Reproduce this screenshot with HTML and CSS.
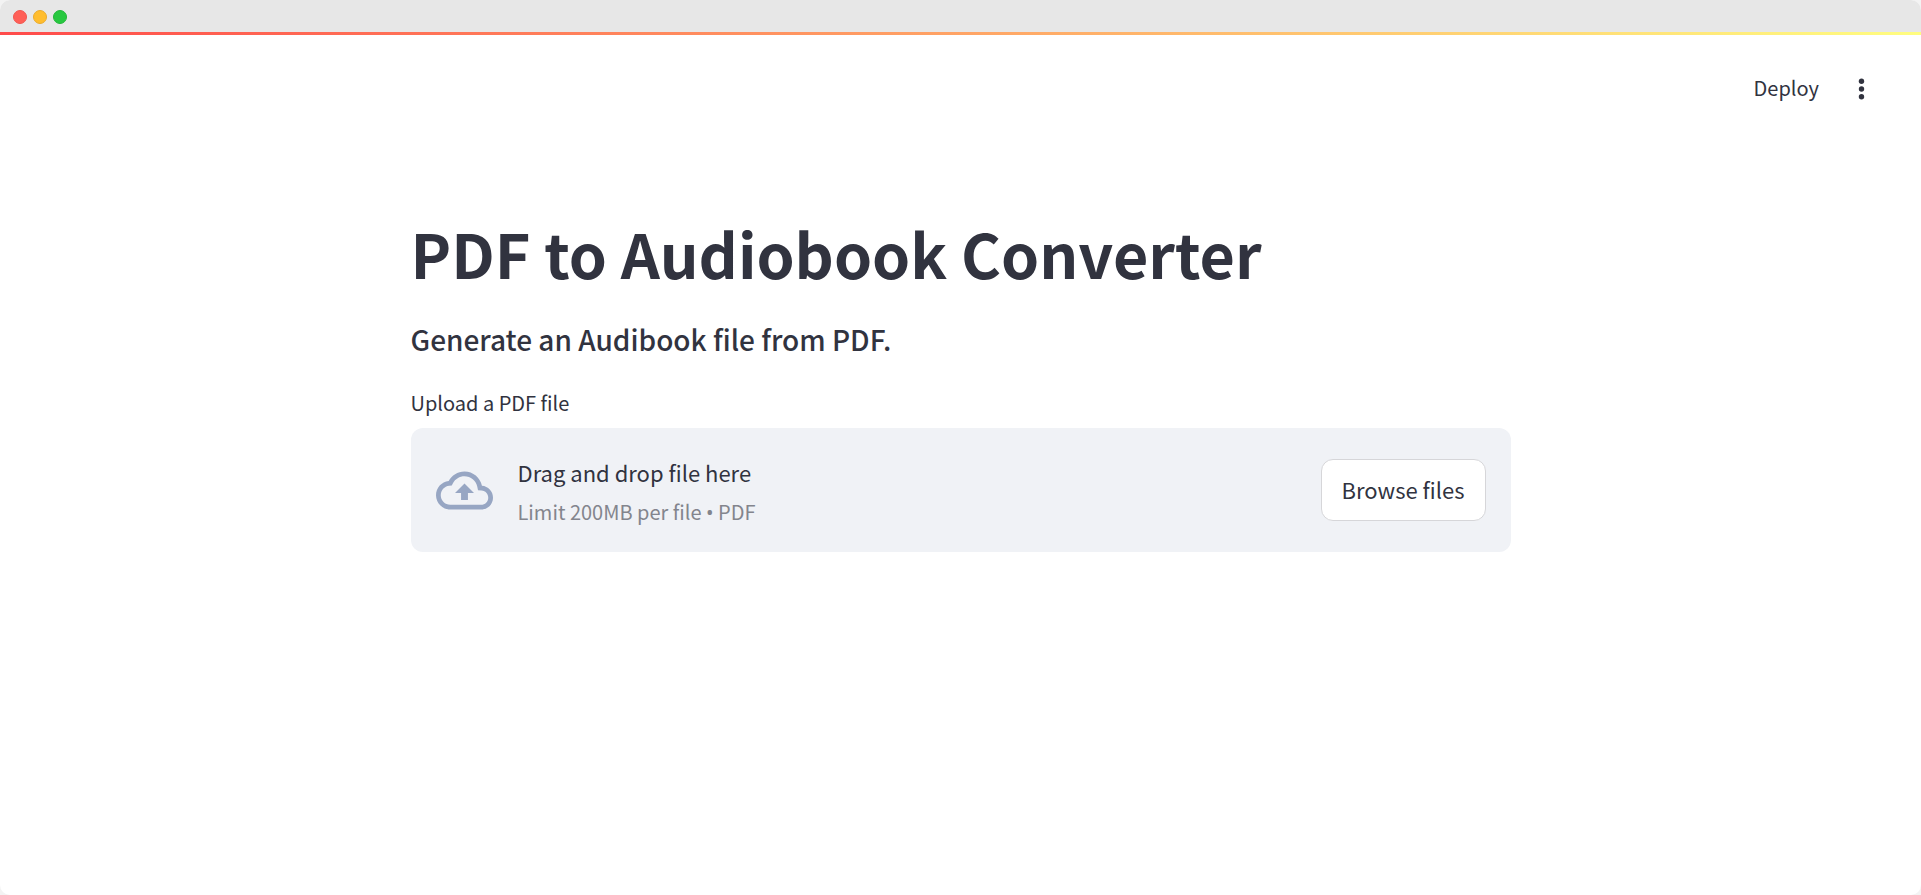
FILE: index.html
```html
<!DOCTYPE html>
<html lang="en">
<head>
<meta charset="utf-8">
<meta name="viewport" content="width=device-width, initial-scale=1">
<title>PDF to Audiobook Converter</title>
<link rel="stylesheet" href="styles.css">
</head>
<body>
<div class="window">
  <div class="titlebar">
    <span class="light light-close"></span>
    <span class="light light-minimize"></span>
    <span class="light light-zoom"></span>
  </div>
  <div class="decoration"></div>
  <header class="toolbar">
    <button class="toolbar-button" type="button">Deploy</button>
    <button class="menu-button" type="button" aria-label="Main menu">
      <svg class="menu-icon" viewBox="0 0 8 24" aria-hidden="true"><circle cx="4.5" cy="4.2" r="2.7"/><circle cx="4.5" cy="12" r="2.7"/><circle cx="4.5" cy="19.8" r="2.7"/></svg>
    </button>
  </header>
  <main class="content">
    <h1 class="title">PDF to Audiobook Converter</h1>
    <h3 class="subtitle">Generate an Audibook file from PDF.</h3>
    <label class="upload-label" for="browse">Upload a PDF file</label>
    <section class="dropzone">
      <svg class="cloud" viewBox="0 0 24 24" aria-hidden="true"><path d="M19.35 10.04C18.67 6.59 15.64 4 12 4 9.11 4 6.6 5.64 5.35 8.04 2.34 8.36 0 10.91 0 14c0 3.31 2.69 6 6 6h13c2.76 0 5-2.24 5-5 0-2.64-2.05-4.78-4.65-4.96zM19 18H6c-2.21 0-4-1.79-4-4 0-2.05 1.53-3.76 3.56-3.97l1.07-.11.5-.95C8.08 7.14 9.94 6 12 6c2.62 0 4.88 1.86 5.39 4.43l.3 1.5 1.53.11c1.56.1 2.78 1.41 2.78 2.96 0 1.65-1.35 3-3 3zM8 13h2.55v3h2.9v-3H16l-4-4z"/></svg>
      <div class="instructions">
        <span class="drag">Drag and drop file here</span>
        <span class="limit">Limit 200MB per file <span class="bullet">•</span> PDF</span>
      </div>
      <button class="browse" id="browse" type="button">Browse files</button>
    </section>
  </main>
</div>
</body>
</html>
```
FILE: styles.css
```css
* { box-sizing: border-box; }

body {
  margin: 0;
  background: #f3f3f3;
  color: #31333f;
  font-family: "Noto Sans CJK SC", "Noto Sans", sans-serif;
}

button {
  font-family: inherit;
  color: inherit;
  cursor: pointer;
}

.window {
  min-height: 100vh;
  background: #fff;
  border-radius: 10px;
  overflow: hidden;
}

.titlebar {
  display: flex;
  align-items: center;
  gap: 6px;
  height: 32px;
  padding: 2px 13px 0;
  background: #e7e7e7;
}

.light {
  width: 14px;
  height: 14px;
  border: 1px solid;
  border-radius: 50%;
}

.light-close { background: #ff5f57; border-color: #f0564f; }
.light-minimize { background: #ffbd2e; border-color: #e9ab2c; }
.light-zoom { background: #28c840; border-color: #22b638; }

.decoration {
  height: 3px;
  background: linear-gradient(90deg, #ff4b4b, #fffd80);
}

.toolbar {
  display: flex;
  justify-content: flex-end;
  align-items: center;
  gap: 34px;
  height: 107px;
  padding: 0 52px;
}

.toolbar-button,
.menu-button {
  display: flex;
  padding: 0;
  border: 0;
  background: none;
  font-size: 20px;
  line-height: 32px;
}

.toolbar-button { padding-bottom: 2px; }

.menu-button { padding: 4px; }

.menu-icon {
  width: 8px;
  height: 24px;
  fill: #31333f;
}

.content {
  display: flex;
  flex-direction: column;
  width: 100%;
  max-width: 1150px;
  margin: 0 auto;
  padding: 69px 25px 25px;
}

.title {
  margin: 0;
  font-size: 61px;
  font-weight: 700;
  line-height: 84px;
}

.subtitle {
  margin: 24px 0 28px;
  font-size: 28px;
  font-weight: 500;
  line-height: 40px;
}

.upload-label {
  margin-bottom: 9px;
  font-size: 20px;
  line-height: 32px;
}

.dropzone {
  display: flex;
  align-items: center;
  gap: 25px;
  padding: 24px 25px;
  border-radius: 12px;
  background: #f0f2f6;
}

.cloud {
  flex: none;
  width: 57px;
  height: 57px;
  fill: #97a6c3;
}

.instructions {
  display: flex;
  flex-direction: column;
  flex: 1;
  gap: 4px;
}

.drag {
  font-size: 22px;
  line-height: 40px;
}

.limit {
  color: #83858d;
  font-size: 20px;
  line-height: 32px;
}

.bullet { font-family: "Noto Sans", sans-serif; line-height: 1; }

.browse {
  padding: 9px 20px 11px;
  border: 1px solid #d6d6d9;
  border-radius: 12px;
  background: #fff;
  font-size: 22px;
  line-height: 40px;
}
```
